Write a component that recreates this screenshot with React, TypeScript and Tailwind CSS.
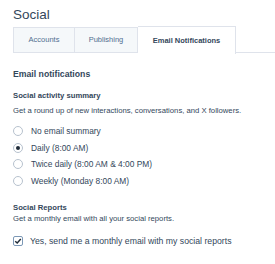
const font = { fontFamily: '"Liberation Sans", Arial, sans-serif' }

const options = [
  { label: 'No email summary', checked: false },
  { label: 'Daily (8:00 AM)', checked: true },
  { label: 'Twice daily (8:00 AM & 4:00 PM)', checked: false },
  { label: 'Weekly (Monday 8:00 AM)', checked: false },
]

function Radio({ checked }: { checked: boolean }) {
  return (
    <span className="flex h-[10px] w-[10px] shrink-0 items-center justify-center rounded-full border border-[#b7c2ce] bg-white">
      {checked && <span className="h-[4px] w-[4px] rounded-full bg-[#1f2b38]" />}
    </span>
  )
}

export default function App() {
  return (
    <div className="h-[264px] w-[275px] overflow-hidden bg-white text-[#33475b]" style={font}>
      <div className="px-[13px] pt-[6px]">
        <h1 className="text-[13.5px] leading-[18px] text-[#33475b]">Social</h1>
      </div>
      <div className="mt-[2px] flex items-end pl-[13px]">
        <div className="flex h-[26px] w-[61px] items-center justify-center border border-r-0 border-[#dfe3eb] bg-[#f5f8fa] text-[7.5px] text-[#516f90]">
          Accounts
        </div>
        <div className="flex h-[26px] w-[64px] items-center justify-center border border-[#dfe3eb] bg-[#f5f8fa] text-[7.5px] text-[#516f90]">
          Publishing
        </div>
        <div className="-mb-px flex h-[28px] w-[98px] items-center justify-center border border-b-0 border-l-0 border-[#dfe3eb] bg-white text-[7.5px] font-bold text-[#33475b]">
          Email Notifications
        </div>
        <div className="flex-1 border-b border-[#dfe3eb]" />
      </div>

      <div className="px-[13px] pt-[15px]">
        <h2 className="text-[8.7px] leading-[12px] font-bold">Email notifications</h2>

        <h3 className="mt-[11px] text-[7.7px] leading-[10px] font-bold">Social activity summary</h3>
        <p className="mt-[5px] text-[7.7px] leading-[10px] whitespace-nowrap">
          Get a round up of new interactions, conversations, and X followers.
        </p>

        <div className="mt-[10px] flex flex-col gap-[6.7px]">
          {options.map((o) => (
            <label key={o.label} className="flex items-center gap-[8px] text-[8.4px] leading-[10px]">
              <Radio checked={o.checked} />
              <span>{o.label}</span>
            </label>
          ))}
        </div>

        <h3 className="mt-[17px] text-[7.7px] leading-[10px] font-bold">Social Reports</h3>
        <p className="mt-[1px] text-[7.7px] leading-[10px]">Get a monthly email with all your social reports.</p>

        <label className="mt-[12px] flex items-center gap-[7px] text-[8.7px] leading-[10px]">
          <span className="flex h-[10px] w-[10px] shrink-0 items-center justify-center rounded-[2px] border border-[#7c98b6] bg-white">
            <svg viewBox="0 0 10 10" className="h-[8px] w-[8px]">
              <path d="M1.5 5.2 L4 7.5 L8.5 2.5" fill="none" stroke="#1f2b38" strokeWidth="1.8" />
            </svg>
          </span>
          <span>Yes, send me a monthly email with my social reports</span>
        </label>
      </div>
    </div>
  )
}
